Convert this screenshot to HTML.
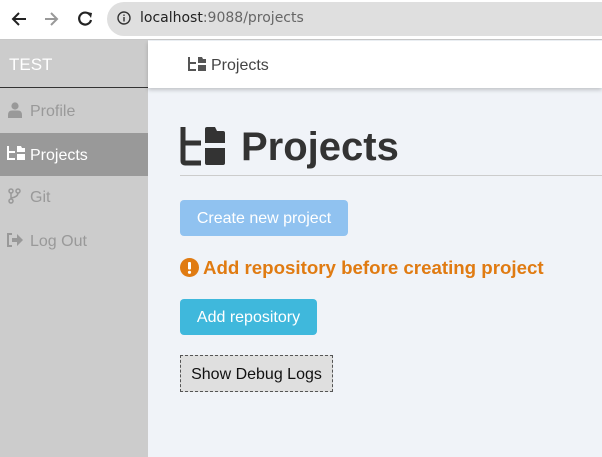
<!DOCTYPE html>
<html><head><style>
*{margin:0;padding:0;box-sizing:border-box}
body{width:602px;height:457px;overflow:hidden;font-family:"Liberation Sans",sans-serif;background:#f0f3f8;position:relative}
.abs{position:absolute}
.chrome{left:0;top:0;width:602px;height:40px;background:#fff;border-bottom:1px solid #c8c8c8}
.pill{left:107px;top:2px;width:520px;height:34px;background:#dfdfdf;border-radius:17px}
.side{left:0;top:40px;width:148px;height:417px;background:#cccccc}
.item{position:absolute;left:0;width:148px;height:43px;color:#999;font-size:16px;line-height:45px;padding-left:30px}
.hdr{left:148px;top:41px;width:454px;height:47px;background:#fff;box-shadow:0 2px 4px rgba(0,0,0,.2)}
.btn{position:absolute;border-radius:4px;color:#fff;font-size:16px;text-align:center}
</style></head><body>
<div class="abs chrome"></div>
<div class="abs pill"></div>
<svg class="abs" style="left:10px;top:9px" width="90" height="20" viewBox="0 0 90 20">
<path d="M16 10H4M9 4L3 10L9 16" stroke="#222" stroke-width="2" fill="none"/>
<path d="M35 10H47M41 4L47 10L41 16" stroke="#999" stroke-width="2" fill="none"/>
<path d="M80 6A6 6 0 1 0 81 11" stroke="#222" stroke-width="2.2" fill="none"/><path d="M77 3L82 4L81 9Z" fill="#222"/>
</svg>
<svg class="abs" style="left:117px;top:11px" width="14" height="14" viewBox="0 0 14 14"><circle cx="7" cy="7" r="6" stroke="#333" stroke-width="1.4" fill="none"/><rect x="6.3" y="6" width="1.4" height="4.5" fill="#333"/><rect x="6.3" y="3.5" width="1.4" height="1.4" fill="#333"/></svg>
<div class="abs" style="left:140px;top:10px;color:#222;font-family:'DejaVu Sans',sans-serif;font-size:14px">localhost<span style="color:#666">:9088/projects</span></div>
<div class="abs side"></div>
<div class="abs" style="left:0;top:40px;width:148px;height:48px;border-bottom:1px solid #333;color:#fff;font-size:17px;line-height:50px;padding-left:9px">TEST</div>
<div class="item" style="top:89px">Profile</div>
<svg class="abs" style="left:8px;top:102px" width="14" height="16" viewBox="0 0 14 16"><circle cx="7" cy="4" r="3.6" fill="#999"/><path d="M0 16V13Q0 8.5 4 8.5H10Q14 8.5 14 13V16Z" fill="#999"/></svg>
<div class="item" style="top:133px;background:#999;color:#fff">Projects</div>
<svg class="abs" style="left:7px;top:146px" width="19" height="15" viewBox="0 0 19 15"><path d="M1 0V13H8M1 6H8" stroke="#fff" stroke-width="2" fill="none"/><path d="M10 0H14L15 2H18V6H10Z M10 8H18V14H10Z" fill="#fff"/></svg>
<div class="item" style="top:175px">Git</div>
<svg class="abs" style="left:8px;top:188px" width="13" height="16" viewBox="0 0 13 16"><circle cx="3" cy="3" r="2" stroke="#999" stroke-width="1.5" fill="none"/><circle cx="3" cy="13" r="2" stroke="#999" stroke-width="1.5" fill="none"/><circle cx="10" cy="3" r="2" stroke="#999" stroke-width="1.5" fill="none"/><path d="M3 5V11M10 5Q10 9 3 10" stroke="#999" stroke-width="1.5" fill="none"/></svg>
<div class="item" style="top:219px">Log Out</div>
<svg class="abs" style="left:7px;top:233px" width="17" height="14" viewBox="0 0 17 14"><path d="M5 1H1V13H5" stroke="#999" stroke-width="2" fill="none"/><path d="M5 5H10V1L16 7L10 13V9H5Z" fill="#999"/></svg>
<div class="abs hdr"></div>
<svg class="abs" style="left:188px;top:57px" width="19" height="15" viewBox="0 0 19 15"><path d="M1 0V13H8M1 6H8" stroke="#555" stroke-width="2" fill="none"/><path d="M10 0H14L15 2H18V6H10Z M10 8H18V14H10Z" fill="#555"/></svg>
<div class="abs" style="left:211px;top:57px;font-size:16px;color:#444">Projects</div>
<svg class="abs" style="left:180px;top:127px" width="46" height="39" viewBox="0 0 46 39"><path d="M3 0V34Q3 36 5 36H21M3 16H21" stroke="#333" stroke-width="5" fill="none"/><path d="M25 2Q25 0 27 0H35L37 4H43Q45 4 45 6V16H25Z M25 21H45V36Q45 38 43 38H27Q25 38 25 36Z" fill="#333"/></svg>
<div class="abs" style="left:241px;top:125px;font-size:40px;font-weight:bold;color:#333">Projects</div>
<div class="abs" style="left:180px;top:175px;width:422px;height:1px;background:#ccc"></div>
<div class="btn" style="left:180px;top:200px;width:168px;height:36px;line-height:37px;background:#90c2f0">Create new project</div>
<svg class="abs" style="left:180px;top:258px" width="19" height="19" viewBox="0 0 19 19"><circle cx="9.5" cy="9.5" r="9.5" fill="#e07b12"/><rect x="8" y="4" width="3" height="7.5" rx="1" fill="#fff"/><circle cx="9.5" cy="14.3" r="1.6" fill="#fff"/></svg>
<div class="abs" style="left:203px;top:257px;font-size:18.7px;font-weight:bold;color:#e07b12">Add repository before creating project</div>
<div class="btn" style="left:180px;top:299px;width:137px;height:36px;line-height:37px;background:#3fb8dc">Add repository</div>
<div class="abs" style="left:180px;top:355px;width:153px;height:37px;line-height:37px;background:#dfdfdf;border:1px dashed #555;font-size:16px;color:#111;text-align:center">Show Debug Logs</div>
</body></html>
